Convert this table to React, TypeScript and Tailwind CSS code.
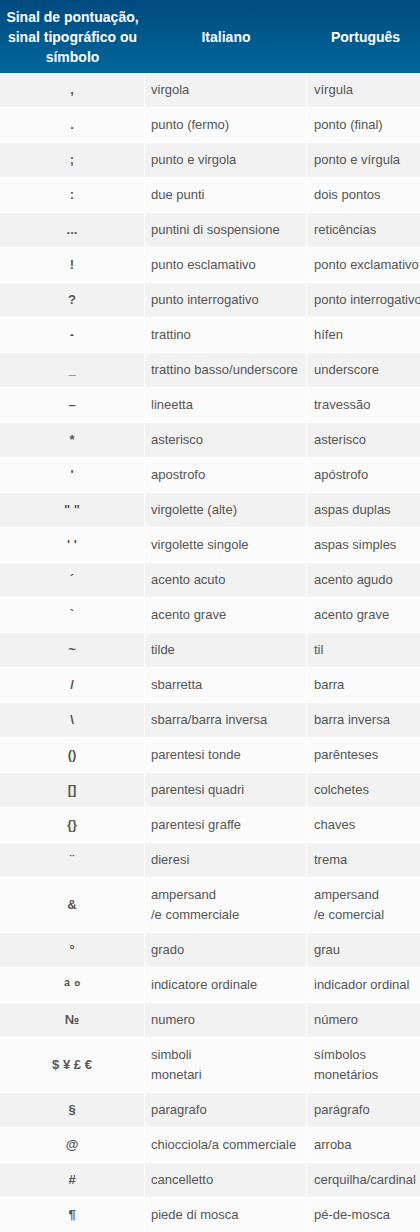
const ROWS: [string, string, string][] = [
  [",", "virgola", "vírgula"],
  [".", "punto (fermo)", "ponto (final)"],
  [";", "punto e virgola", "ponto e vírgula"],
  [":", "due punti", "dois pontos"],
  ["...", "puntini di sospensione", "reticências"],
  ["!", "punto esclamativo", "ponto exclamativo"],
  ["?", "punto interrogativo", "ponto interrogativo"],
  ["-", "trattino", "hífen"],
  ["_", "trattino basso/underscore", "underscore"],
  ["–", "lineetta", "travessão"],
  ["*", "asterisco", "asterisco"],
  ["'", "apostrofo", "apóstrofo"],
  ["\" \"", "virgolette (alte)", "aspas duplas"],
  ["' '", "virgolette singole", "aspas simples"],
  ["´", "acento acuto", "acento agudo"],
  ["`", "acento grave", "acento grave"],
  ["~", "tilde", "til"],
  ["/", "sbarretta", "barra"],
  ["\\", "sbarra/barra inversa", "barra inversa"],
  ["()", "parentesi tonde", "parênteses"],
  ["[]", "parentesi quadri", "colchetes"],
  ["{}", "parentesi graffe", "chaves"],
  ["¨", "dieresi", "trema"],
  ["&", "ampersand\n/e commerciale", "ampersand\n/e comercial"],
  ["°", "grado", "grau"],
  ["ª º", "indicatore ordinale", "indicador ordinal"],
  ["№", "numero", "número"],
  ["$ ¥ £ €", "simboli\nmonetari", "símbolos\nmonetários"],
  ["§", "paragrafo", "parágrafo"],
  ["@", "chiocciola/a commerciale", "arroba"],
  ["#", "cancelletto", "cerquilha/cardinal"],
  ["¶", "piede di mosca", "pé-de-mosca"],
];

export default function App() {
  return (
    <div className="w-[420px] overflow-hidden bg-white font-['Liberation_Sans',Arial,sans-serif] text-[13px] leading-[20px] text-[#555]">
      {/* header */}
      <div className="flex h-[73px] bg-gradient-to-b from-[#004a7e] to-[#00679c] text-[14px] font-bold text-white">
        <div className="flex w-[145px] items-center justify-center text-center">
          Sinal de pontuação,
          <br />
          sinal tipográfico ou
          <br />
          símbolo
        </div>
        <div className="flex w-[162px] items-center justify-center">Italiano</div>
        <div className="flex flex-1 items-center justify-center pl-[4px]">Português</div>
      </div>

      {ROWS.map(([sym, it, pt], i) => (
        <div
          key={i}
          className={`flex border-b border-white ${i % 2 === 0 ? "bg-[#f2f2f2]" : "bg-[#fbfbfb]"}`}
        >
          <div className="flex w-[145px] items-center justify-center border-r border-white py-[7px] font-bold">
            {sym === "ª º" ? <span className="translate-y-[2px] text-[16px] leading-[20px]">{sym}</span> : sym}
          </div>
          <div className="w-[162px] whitespace-pre-line border-r border-white py-[7px] pl-[6px]">{it}</div>
          <div className="min-w-0 flex-1 overflow-hidden whitespace-pre py-[7px] pl-[7px]">{pt}</div>
        </div>
      ))}
    </div>
  );
}
